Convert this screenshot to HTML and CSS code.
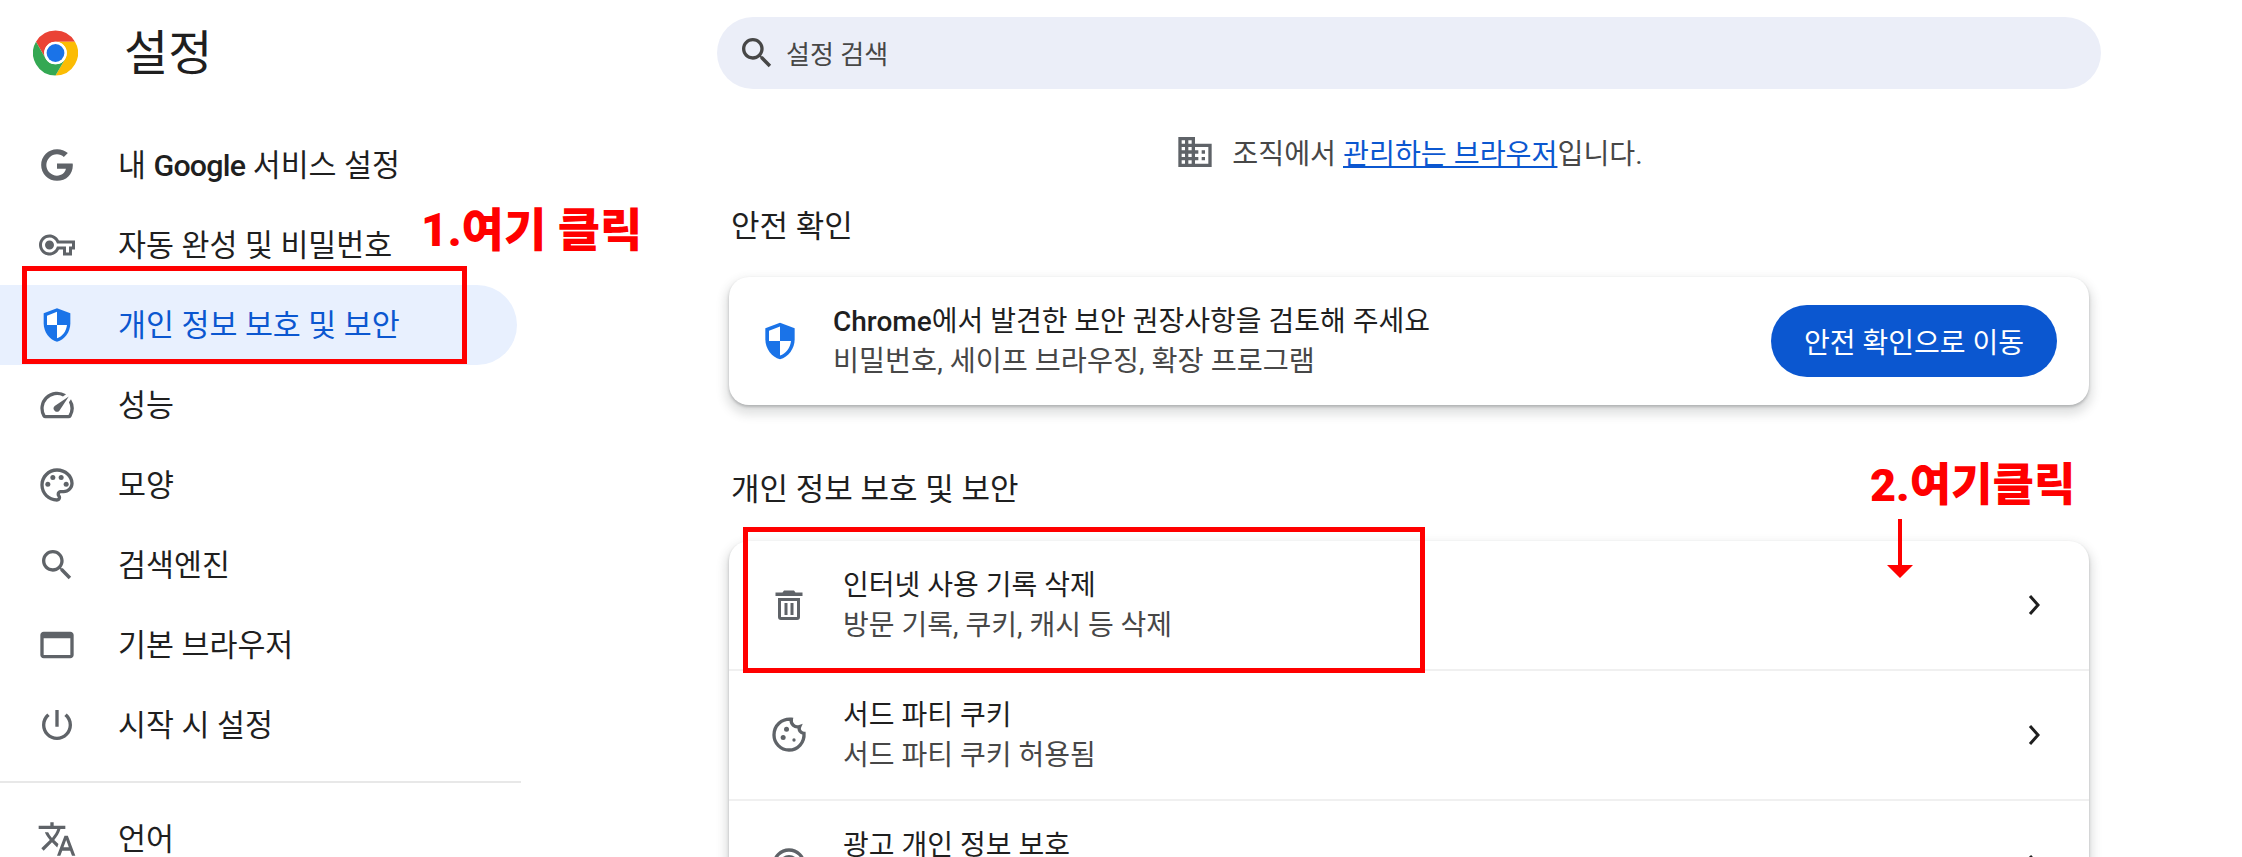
FILE: index.html
```html
<!DOCTYPE html>
<html lang="ko">

<head>
  <meta charset="UTF-8">
  <meta name="viewport" content="width=device-width, initial-scale=1.0">
  <title>설정</title>
  <link rel="stylesheet" href="styles.css">
</head>

<body>
  <div class="page">
    <aside class="sidebar">
      <div class="brand">
        <svg class="brand-logo" viewBox="0 0 48 48">
          <path fill="#ea4335" d="M3.2 12A24 24 0 0 1 44.8 12H24A12 12 0 0 0 13.6 30Z"/>
          <path fill="#fbbc04" d="M44.8 12A24 24 0 0 1 24 48L34.4 30A12 12 0 0 0 24 12Z"/>
          <path fill="#34a853" d="M24 48A24 24 0 0 1 3.2 12L13.6 30A12 12 0 0 0 34.4 30Z"/>
          <circle cx="24" cy="24" r="12" fill="#fff"/>
          <circle cx="24" cy="24" r="9.5" fill="#1a73e8"/>
        </svg>
        <h1>설정</h1>
      </div>

      <nav class="nav">
        <a class="nav-item">
          <svg class="icon" viewBox="0 0 24 24"><path d="M21.35 11.1H12v3.2h5.35c-.5 2.5-2.6 4.1-5.35 4.1a6.4 6.4 0 0 1 0-12.8c1.6 0 3 .55 4.1 1.6l2.4-2.4A9.9 9.9 0 0 0 12 2.5a9.5 9.5 0 1 0 0 19c5.5 0 9.5-3.9 9.5-9.4 0-.35-.05-.7-.15-1z"/></svg>
          <span>내 <b class="latin latin-tight">Google</b> 서비스 설정</span>
        </a>
        <a class="nav-item">
          <svg class="icon icon-key" viewBox="0 0 24 24"><path d="M22 19h-6v-4h-2.68c-1.14 2.42-3.6 4-6.32 4-3.86 0-7-3.14-7-7s3.14-7 7-7c2.72 0 5.17 1.58 6.32 4H24v6h-2v4zm-4-2h2v-4h2v-2H11.94l-.23-.67C11.01 8.34 9.11 7 7 7c-2.76 0-5 2.24-5 5s2.24 5 5 5c2.11 0 4.01-1.34 4.71-3.33l.23-.67H18v4zM7 15c-1.65 0-3-1.35-3-3s1.35-3 3-3 3 1.35 3 3-1.35 3-3 3z"/></svg>
          <span>자동 완성 및 비밀번호</span>
        </a>
        <a class="nav-item active">
          <svg class="icon" viewBox="0 0 24 24">
            <path d="M12 2 4 5v6.09c0 5.05 3.41 9.76 8 10.91 4.59-1.15 8-5.86 8-10.91V5l-8-3z"/>
            <path class="shield-cut" d="M12 4.1 6 6.4V12h6zM12 12h6c-.4 3.9-2.9 7-6 7.9z"/>
          </svg>
          <span>개인 정보 보호 및 보안</span>
        </a>
        <a class="nav-item">
          <svg class="icon" viewBox="0 0 24 24"><path d="M20.38 8.57l-1.23 1.85a8 8 0 0 1-.22 7.58H5.07A8 8 0 0 1 15.58 6.85l1.85-1.23A10 10 0 0 0 3.35 19a2 2 0 0 0 1.72 1h13.85a2 2 0 0 0 1.74-1 10 10 0 0 0-.27-10.44zm-9.79 6.84a2 2 0 0 0 2.83 0l5.66-8.49-8.49 5.66a2 2 0 0 0 0 2.83z"/></svg>
          <span>성능</span>
        </a>
        <a class="nav-item">
          <svg class="icon" viewBox="0 0 24 24">
            <path d="M12 22C6.49 22 2 17.51 2 12S6.49 2 12 2s10 4.04 10 9c0 3.31-2.69 6-6 6h-1.77c-.28 0-.5.22-.5.5 0 .12.05.23.13.33.41.47.64 1.06.64 1.67 0 1.38-1.12 2.5-2.5 2.5zm0-18c-4.41 0-8 3.59-8 8s3.59 8 8 8c.28 0 .5-.22.5-.5 0-.16-.08-.28-.14-.35-.41-.46-.63-1.05-.63-1.65 0-1.38 1.12-2.5 2.5-2.5H16c2.21 0 4-1.79 4-4 0-3.86-3.59-7-8-7z"/>
            <circle cx="6.5" cy="11.5" r="1.5"/><circle cx="9.5" cy="7.5" r="1.5"/><circle cx="14.5" cy="7.5" r="1.5"/><circle cx="17.5" cy="11.5" r="1.5"/>
          </svg>
          <span>모양</span>
        </a>
        <a class="nav-item">
          <svg class="icon" viewBox="0 0 24 24"><path d="M15.5 14h-.79l-.28-.27C15.41 12.59 16 11.11 16 9.5 16 5.91 13.09 3 9.5 3S3 5.91 3 9.5 5.91 16 9.5 16c1.61 0 3.09-.59 4.23-1.57l.27.28v.79l5 4.99L20.49 19l-4.99-5zm-6 0C7.01 14 5 11.99 5 9.5S7.01 5 9.5 5 14 7.01 14 9.5 11.99 14 9.5 14z"/></svg>
          <span>검색엔진</span>
        </a>
        <a class="nav-item">
          <svg class="icon" viewBox="0 0 24 24"><path d="M20 4H4c-1.11 0-2 .9-2 2v12c0 1.1.89 2 2 2h16c1.1 0 2-.9 2-2V6c0-1.1-.89-2-2-2zm0 14H4V8h16v10z"/></svg>
          <span>기본 브라우저</span>
        </a>
        <a class="nav-item">
          <svg class="icon" viewBox="0 0 24 24"><path d="M13 3h-2v10h2V3zm4.83 2.17l-1.42 1.42C17.99 7.86 19 9.81 19 12c0 3.87-3.13 7-7 7s-7-3.13-7-7c0-2.19 1.01-4.14 2.58-5.42L6.17 5.17C4.23 6.82 3 9.26 3 12c0 4.97 4.03 9 9 9s9-4.03 9-9c0-2.74-1.23-5.18-3.17-6.83z"/></svg>
          <span>시작 시 설정</span>
        </a>
        <div class="nav-divider"></div>
        <a class="nav-item">
          <svg class="icon" viewBox="0 0 24 24"><path d="M12.87 15.07l-2.54-2.51.03-.03c1.74-1.94 2.98-4.17 3.71-6.53H17V4h-7V2H8v2H1v1.99h11.17C11.5 7.92 10.44 9.75 9 11.35 8.07 10.32 7.3 9.19 6.69 8h-2c.73 1.63 1.73 3.17 2.98 4.56l-5.09 5.02L4 19l5-5 3.11 3.11.76-2.04zM18.5 10h-2L12 22h2l1.12-3h4.75L21 22h2l-4.5-12zm-2.62 7l1.62-4.33L19.12 17h-3.24z"/></svg>
          <span>언어</span>
        </a>
      </nav>
    </aside>

    <main class="main">
      <div class="search">
        <svg class="icon search-icon" viewBox="0 0 24 24"><path d="M15.5 14h-.79l-.28-.27C15.41 12.59 16 11.11 16 9.5 16 5.91 13.09 3 9.5 3S3 5.91 3 9.5 5.91 16 9.5 16c1.61 0 3.09-.59 4.23-1.57l.27.28v.79l5 4.99L20.49 19l-4.99-5zm-6 0C7.01 14 5 11.99 5 9.5S7.01 5 9.5 5 14 7.01 14 9.5 11.99 14 9.5 14z"/></svg>
        <span class="search-text">설정 검색</span>
      </div>

      <div class="managed">
        <svg class="icon" viewBox="0 0 24 24"><path d="M12 7V3H2v18h20V7H12zM6 19H4v-2h2v2zm0-4H4v-2h2v2zm0-4H4V9h2v2zm0-4H4V5h2v2zm4 12H8v-2h2v2zm0-4H8v-2h2v2zm0-4H8V9h2v2zm0-4H8V5h2v2zm10 12h-8v-2h2v-2h-2v-2h2v-2h-2V9h8v10zm-2-8h-2v2h2v-2zm0 4h-2v2h2v-2z"/></svg>
        <span class="managed-text">조직에서 <a class="link">관리하는 브라우저</a>입니다.</span>
      </div>

      <h2 class="section-title">안전 확인</h2>
      <section class="card safety">
        <svg class="safety-icon" viewBox="0 0 24 24">
          <path d="M12 2 4 5v6.09c0 5.05 3.41 9.76 8 10.91 4.59-1.15 8-5.86 8-10.91V5l-8-3z"/>
          <path class="shield-cut" d="M12 4.1 6 6.4V12h6zM12 12h6c-.4 3.9-2.9 7-6 7.9z"/>
        </svg>
        <div class="row-text">
          <div class="row-title"><b class="latin">Chrome</b>에서 발견한 보안 권장사항을 검토해 주세요</div>
          <div class="row-sub">비밀번호, 세이프 브라우징, 확장 프로그램</div>
        </div>
        <button class="action-btn">안전 확인으로 이동</button>
      </section>

      <h2 class="section-title second">개인 정보 보호 및 보안</h2>
      <section class="card">
        <div class="row">
          <svg class="icon" viewBox="0 0 40 40">
            <path d="M15 5.5h10l1.5 2h7v3.5h-27V7.5h7z"/>
            <path d="M9 13h22v19a3 3 0 0 1-3 3H12a3 3 0 0 1-3-3zm3 3v16h16V16z"/>
            <rect x="15.5" y="18" width="3" height="12"/><rect x="21.5" y="18" width="3" height="12"/>
          </svg>
          <div class="row-text">
            <div class="row-title">인터넷 사용 기록 삭제</div>
            <div class="row-sub">방문 기록, 쿠키, 캐시 등 삭제</div>
          </div>
          <svg class="chevron" viewBox="0 0 12 20"><path d="M2 1l8 9-8 9"/></svg>
        </div>
        <div class="row">
          <svg class="icon" viewBox="0 0 24 24">
            <path class="outline" d="M21 11c-1.8 0-3.6-1.9-2.6-4.1-3 1-5.6-1.6-5-4.4C7.5 2 3 6.4 3 12c0 5 4 9 9 9 5.4 0 9.4-4.6 9-10z"/>
            <circle cx="8.5" cy="13.5" r="1.5"/><circle cx="10.5" cy="8.5" r="1.5"/><circle cx="15" cy="15" r="1"/>
          </svg>
          <div class="row-text">
            <div class="row-title">서드 파티 쿠키</div>
            <div class="row-sub">서드 파티 쿠키 허용됨</div>
          </div>
          <svg class="chevron" viewBox="0 0 12 20"><path d="M2 1l8 9-8 9"/></svg>
        </div>
        <div class="row">
          <svg class="icon" viewBox="0 0 24 24">
            <circle class="outline" cx="12" cy="12" r="9"/><circle class="outline" cx="12" cy="12" r="5"/><circle cx="12" cy="12" r="2"/>
          </svg>
          <div class="row-text row-text-tall">
            <div class="row-title">광고 개인 정보 보호</div>
          </div>
          <svg class="chevron" viewBox="0 0 12 20"><path d="M2 1l8 9-8 9"/></svg>
        </div>
      </section>
    </main>

    <!-- 빨간 표시 -->
    <div class="mark mark-nav"></div>
    <div class="note note-one">1.여기 클릭</div>
    <div class="mark mark-row"></div>
    <div class="note note-two">2.여기클릭</div>
    <svg class="note-arrow" viewBox="0 0 26 59"><path d="M11 0h4v46h11L13 59 0 46h11z"/></svg>
  </div>
</body>

</html>
```

FILE: styles.css
```css
* {
  box-sizing: border-box;
}

html,
body {
  margin: 0;
  height: 100%;
  overflow: hidden;
  background-color: #fff;
}

body {
  font-family: Roboto, "Noto Sans CJK KR", sans-serif;
  color: #1f1f1f;
}

.page {
  position: relative;
  display: flex;
  height: 857px;
  overflow: hidden;
}

.icon {
  flex: none;
  width: 40px;
  height: 40px;
  fill: #5f6368;
}

.icon-key {
  padding: 2px;
}

.latin {
  font-weight: 500;
}

.latin-tight {
  letter-spacing: -0.8px;
}

/* 사이드바 */
.sidebar {
  flex: none;
  width: 521px;
}

.brand {
  display: flex;
  align-items: center;
  gap: 46px;
  height: 106px;
  padding-left: 33px;
}

.brand-logo {
  width: 45px;
  height: 46px;
}

.brand h1 {
  margin: 2px 0 0;
  font-size: 48px;
  font-weight: 400;
  line-height: 60px;
}

.nav {
  padding-top: 19px;
}

.nav-item {
  display: flex;
  align-items: center;
  gap: 41px;
  width: 517px;
  height: 80px;
  padding-left: 37px;
  font-size: 30.4px;
  border-radius: 0 40px 40px 0;
}

.nav-item span {
  margin-bottom: 4px;
}

.nav-item.active {
  background-color: #e8f0fe;
  color: #0b57d0;
}

.nav-item.active .icon {
  fill: #1a73e8;
}

.shield-cut {
  fill: #fff;
}

.nav-divider {
  height: 2px;
  margin: 16px 0;
  background-color: #e8e8e8;
}

/* 본문 */
.main {
  flex: none;
  width: 1360px;
  margin-left: 208px;
  padding-top: 17px;
}

.search {
  display: flex;
  align-items: center;
  gap: 9px;
  width: 1384px;
  height: 72px;
  margin-left: -12px;
  padding-left: 20px;
  border-radius: 36px;
  background-color: #ebeef8;
  font-size: 26px;
  color: #474747;
}

.search-text {
  margin-bottom: 2px;
}

.icon.search-icon {
  fill: #474747;
}

.managed {
  display: flex;
  align-items: center;
  justify-content: center;
  gap: 17px;
  height: 40px;
  margin-top: 43px;
  font-size: 28.2px;
  color: #474747;
}

.managed-text {
  margin-bottom: 2px;
}

.link {
  color: #0b57d0;
  text-decoration: underline;
}

.section-title {
  margin: 35px 0 30px 2px;
  font-size: 31px;
  font-weight: 400;
  line-height: 40px;
}

.section-title.second {
  margin-top: 65px;
  margin-bottom: 31px;
}

.card {
  border-radius: 20px;
  background-color: #fff;
  box-shadow: 0 2px 3px rgba(60, 64, 67, 0.3), 0 6px 10px 4px rgba(60, 64, 67, 0.15);
}

.safety {
  display: flex;
  align-items: center;
  gap: 31px;
  height: 128px;
  padding: 0 32px 0 29px;
}

.safety .row-sub {
  font-size: 28.3px;
}

.safety-icon {
  flex: none;
  width: 44px;
  height: 44px;
  fill: #1a73e8;
}

.row {
  display: flex;
  align-items: center;
  gap: 34px;
  height: 130px;
  padding: 0 49px 0 40px;
  border-bottom: 2px solid #f0f0f0;
}

.row-text {
  flex: 1;
  margin-top: 2px;
}

.row-text-tall {
  min-height: 80px;
}

.row-title {
  font-size: 28px;
  line-height: 40px;
}

.row-sub {
  font-size: 28px;
  line-height: 40px;
  color: #474747;
}

.chevron {
  flex: none;
  width: 12px;
  height: 20px;
  fill: none;
  stroke: #1f1f1f;
  stroke-width: 3;
}

.outline {
  fill: none;
  stroke: #5f6368;
  stroke-width: 2;
}

.action-btn {
  flex: none;
  width: 286px;
  height: 72px;
  border: none;
  border-radius: 36px;
  background-color: #0b57d0;
  color: #fff;
  font-family: inherit;
  font-size: 28px;
}

/* 빨간 표시 */
.mark {
  position: absolute;
  border: 5px solid #f00;
}

.mark-nav {
  left: 22px;
  top: 266px;
  width: 445px;
  height: 98px;
}

.mark-row {
  left: 743px;
  top: 527px;
  width: 682px;
  height: 146px;
}

.note {
  position: absolute;
  font-size: 46px;
  font-weight: 900;
  line-height: 60px;
  color: #f00;
  white-space: nowrap;
}

.note-one {
  left: 421px;
  top: 200px;
}

.note-two {
  left: 1870px;
  top: 456px;
  font-size: 45px;
}

.note-arrow {
  position: absolute;
  left: 1887px;
  top: 519px;
  width: 26px;
  height: 59px;
  fill: #f00;
}
```
